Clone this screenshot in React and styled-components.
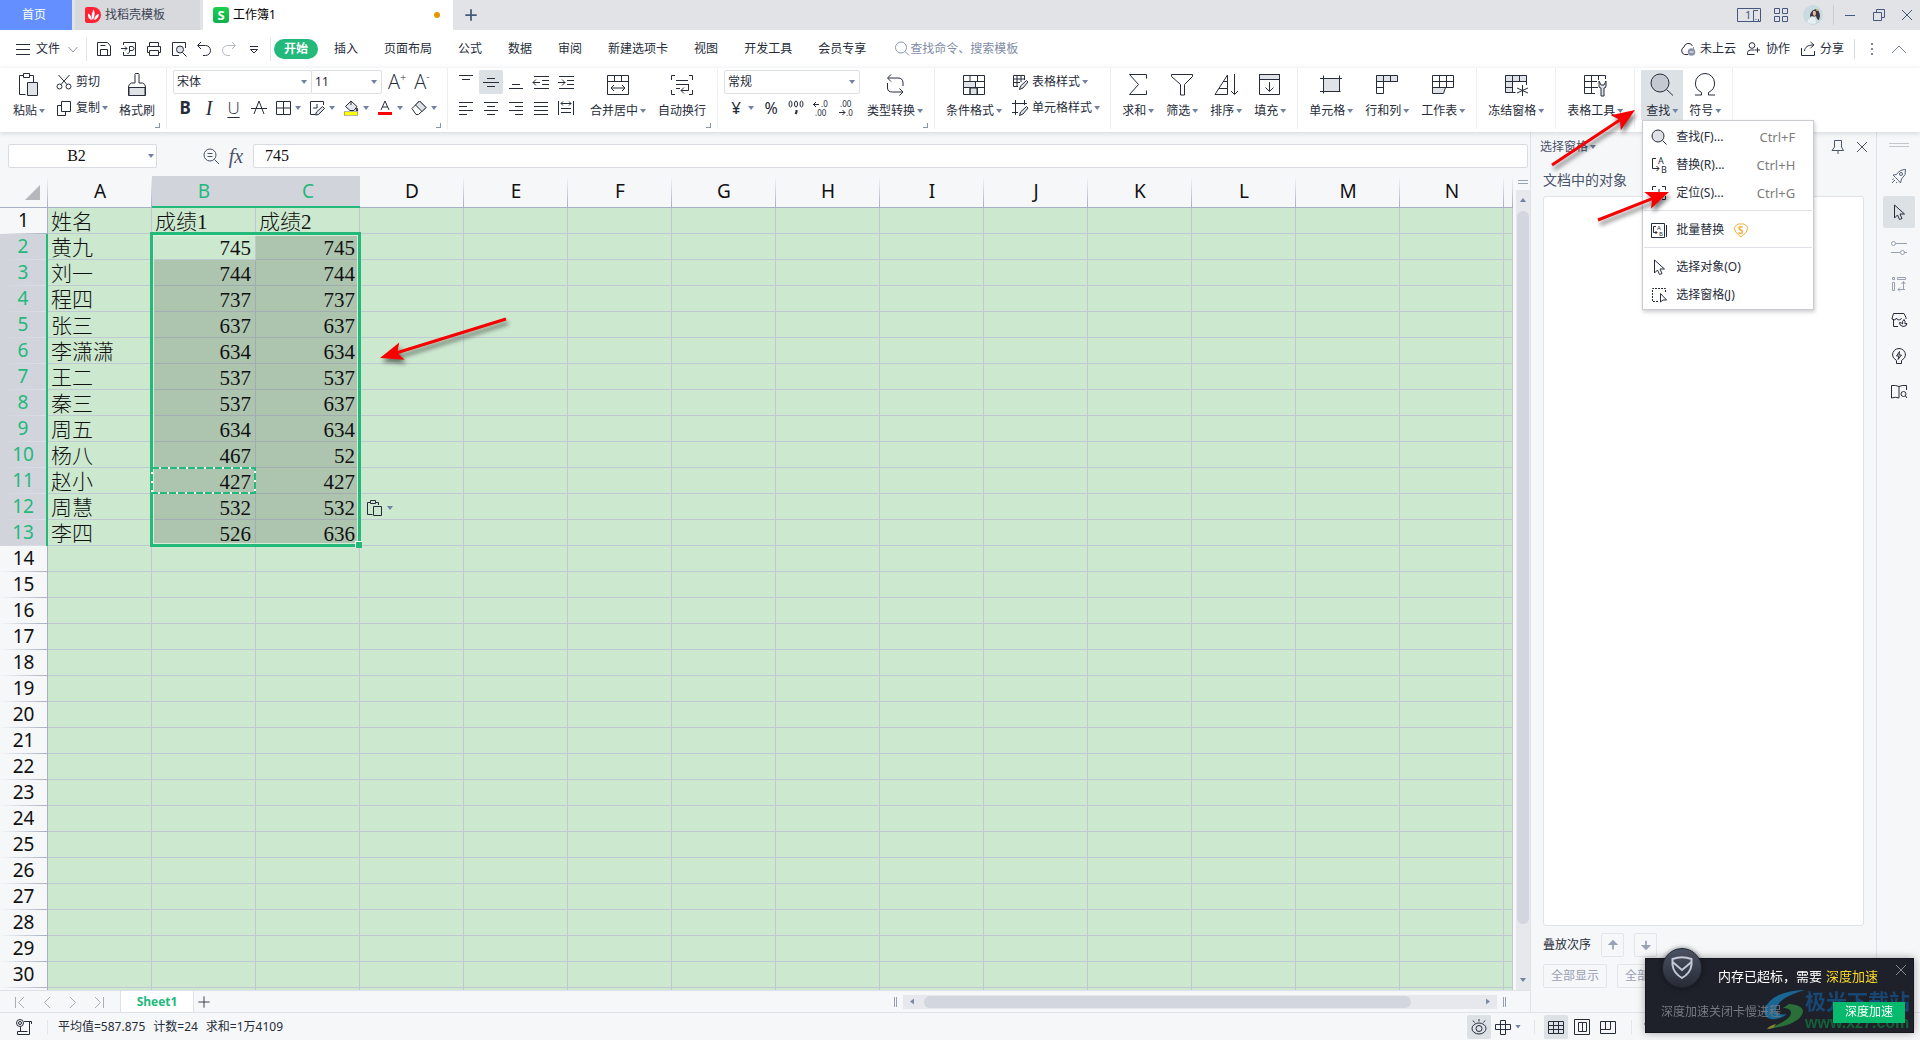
import React from "react"
import styled, { createGlobalStyle, css } from "styled-components"

const GlobalStyle = createGlobalStyle`
  * {
    box-sizing: border-box;
  }
  body {
    margin: 0;
    overflow: hidden;
    color: #262c3a;
    font: 12px/16px "Noto Sans", "Noto Sans CJK SC", sans-serif;
  }
  button, input, select, textarea {
    margin: 0;
    padding: 0;
    border: 0;
    background: none;
    color: inherit;
    font: inherit;
    outline: 0;
  }
  a {
    color: inherit;
    text-decoration: none;
  }
`

/* ---------- icons ---------- */

const Svg = styled.svg`
  display: block;
  flex: none;
  fill: none;
  stroke: currentColor;
  stroke-width: ${props => props.$weight || 1};
  overflow: visible;
  text {
    fill: currentColor;
    stroke: none;
    font-family: "Noto Sans", sans-serif;
  }
`

const shapes = {
  menu: <path d="M1 3.500h14M1 8.500h14M1 13.500h14" />,
  chevDown: <path d="M3.500 6l4.500 5 4.500-5" stroke="#8d93a0" />,
  chevUp: <path d="M1 12l7-7 7 7" />,
  save: <path d="M1.500 1.500v13h13V5l-3-3.500h-10zM4.500 14.500V8.500h7v6M4.500 4.500h5" />,
  pdf: (
    <path d="M2.500 4V1.500h12v13h-12V11M0 7.500h6M4 5.500l2 2-2 2M8.500 11V5.500h2.500a2 2 0 0 1 0 4H8.500M6.500 12.500c2 0 2-1.500 2-3" />
  ),
  print: <path d="M3.500 5.500v-4h9v4M3.500 11.500h-2v-6h13v6h-2M3.500 9.500h9v5h-9z" />,
  preview: (
    <>
      <path d="M14.500 7V1.500h-13v13H8" />
      <circle cx="9" cy="8.500" r="3.500" fill="#dfe2e8" />
      <path d="M11.500 11.500l4 4" />
    </>
  ),
  undo: <path d="M5 1L1.500 4.500 5 8M2 4.500h7.500a5 5 0 0 1 0 10H7" />,
  redo: <path d="M11 1l3.500 3.500L11 8M14 4.500H6.500a5 5 0 0 0 0 10H9" />,
  more: (
    <>
      <path d="M4 5.500h8" />
      <path d="M4.500 8.500h7l-3.500 3.500z" />
    </>
  ),
  search: (
    <>
      <circle cx="7" cy="6.500" r="5.500" />
      <path d="M11 10.500l4 4" />
    </>
  ),
  searchFill: (
    <>
      <circle cx="7" cy="7" r="6" fill="#dfe0e5" />
      <path d="M11.500 11.500l4 4" />
    </>
  ),
  cloud: (
    <>
      <path d="M8 13.500H4.500a4 4 0 0 1-.5-7.500 4.500 4.500 0 0 1 8.500-1M13.500 6.500v1" />
      <circle cx="11.500" cy="11" r="3.800" fill="#8b94a8" stroke="none" />
      <path d="M9.500 11h4" stroke="#fff" />
    </>
  ),
  person: (
    <>
      <circle cx="6" cy="4.500" r="2.800" />
      <path d="M8.500 13.500h-7v-2a3 3 0 0 1 3-2.500h4M11.500 6.500v5M9 9h5" />
    </>
  ),
  share: <path d="M1.500 7v7.500h13V10M4.500 10c.5-4 3-6 9-6M10.500 1l3.500 3-3.500 3" />,
  dots: <path d="M8 2v2M8 7v2M8 12v2" stroke="#7c8596" strokeWidth="2" />,
  plus: <path d="M8 1.500v13M1.500 8h13" />,
  close: <path d="M3 3l10 10M13 3L3 13" />,
  min: <path d="M3 8.500h10" />,
  restore: <path d="M2.500 5.500h8v8h-8zM5.500 5.500v-3h8v8h-3" />,
  apps: <path d="M1.500 1.500h5v5h-5zM9.500 1.500h5v5h-5zM1.500 9.500h5v5h-5zM9.500 9.500h5v5h-5z" />,
  paste: (
    <>
      <path d="M8.500 21.500h-6v-19h4M13 2.500h3.500V9M6.500.5h6v4h-6z" />
      <path d="M10.500 9.500h10v13h-10z" fill="#dfe2e6" />
    </>
  ),
  pasteSmall: (
    <>
      <path d="M6.500 14.500h-5v-12h3M9.500 2.500h3V5M4.500.5h5v3h-5z" />
      <path d="M7.500 6.500h8v9h-8z" />
    </>
  ),
  cut: (
    <>
      <circle cx="3.500" cy="12.500" r="2.500" />
      <circle cx="12.500" cy="12.500" r="2.500" />
      <path d="M2.500 1l8.500 9.500M13.500 1L5 10.500" />
    </>
  ),
  copy: <path d="M5.500 1.500h9v10h-9zM5.500 5.500h-4v10h8v-4" />,
  brush: (
    <>
      <path d="M10 10V2a1 1 0 0 1 1-1.500h2a1 1 0 0 1 1 1.500v8h3.500q3 1 3 4v8.500h-17V14q0-3 3-4z" />
      <path d="M4 14.500h16v8H4z" fill="#dfe2e6" />
    </>
  ),
  border: <path d="M1.500 1.500h14v13h-14zM8.500 1.500v13M1.500 8h14" />,
  drawBorder: (
    <>
      <path d="M6 14.500H1.500v-13h13V5M4 8h4M8 4v4" />
      <path d="M13.500 6.500l2 2-6 6-3 .5 1-3z" fill="#dfe2e6" />
    </>
  ),
  fill: (
    <>
      <path d="M8 1L2.500 6.500 7 10.500h4l3-4zM8 1v4M14 8q2 3 0 3t0-3" fill="#e5e7eb" />
      <path d="M1 13.500h14" stroke="#6b6f4a" strokeWidth="4" />
      <path d="M1.500 13.500h13" stroke="#ff0" strokeWidth="3" />
    </>
  ),
  fontColor: (
    <>
      <path d="M4 10L8 1l4 9M5.500 7h5" />
      <path d="M1 13.500h14" stroke="#f00" strokeWidth="3" />
    </>
  ),
  eraser: (
    <>
      <path d="M1 8.500L8.500 1l6.500 6.500-7.500 7H5z" />
      <path d="M4.500 5l6.500 6.500 4-4L8.500 1z" fill="#dfe2e6" />
    </>
  ),
  strike: <path d="M3 14L8 1l5 13M0 8.500h16" />,
  alignTop: <path d="M1 1.500h14M4 5.500h8" />,
  alignMid: <path d="M4 4.500h8M0 8.500h16M4 12.500h8" />,
  alignBot: <path d="M4 10.500h8M1 14.500h14" />,
  outdent: <path d="M1 2.500h15M9 6.500h7M9 10.500h7M1 14.500h15M0 8.500h7M3 5.500l-3 3 3 3" />,
  indent: <path d="M1 2.500h15M9 6.500h7M9 10.500h7M1 14.500h15M0 8.500h7M4 5.500l3 3-3 3" />,
  left: <path d="M1 2.500h14M1 6.500h8M1 10.500h14M1 14.500h8" />,
  center: <path d="M1 2.500h14M4 6.500h8M1 10.500h14M4 14.500h8" />,
  right: <path d="M1 2.500h14M7 6.500h8M1 10.500h14M7 14.500h8" />,
  justify: <path d="M1 2.500h14M1 6.500h14M1 10.500h14M1 14.500h14" />,
  spread: <path d="M.5 1v14M15.500 1v14M3 3.500h10M5 1.500l-2 2 2 2M11 1.500l2 2-2 2M3 8.500h10M3 12.500h10" />,
  merge: <path d="M1.500 2.500h21v19h-21zM1.500 8.500h21M8.500 2.500v6M15.500 2.500v6M5 15h14M8 12l-3 3 3 3M16 12l3 3-3 3" />,
  wrap: (
    <path d="M1.500 7V2.500H5M19 2.500h3.500V7M1.500 17v4.500H5M19 21.500h3.500V17M6 7.500h12M6 11.500h12M6 15.500h4M18.500 11v6.500H11M14 14.500l-3 3 3 3" />
  ),
  comma: (
    <>
      <ellipse cx="2.500" cy="4" rx="1.500" ry="3" />
      <ellipse cx="8" cy="4" rx="1.500" ry="3" />
      <ellipse cx="13.500" cy="4" rx="1.500" ry="3" />
      <path d="M8.500 10v2l-1 2" strokeWidth="2" />
    </>
  ),
  decLess: (
    <>
      <path d="M0 4.500h6M3 2L.500 4.500 3 7" />
      <text x="8" y="7" fontSize="8">.0</text>
      <text x="2" y="16" fontSize="8">.00</text>
    </>
  ),
  decMore: (
    <>
      <path d="M1 12.500h6M4.500 10L7 12.500 4.500 15" />
      <text x="2" y="7" fontSize="8">.00</text>
      <text x="8" y="16" fontSize="8">.0</text>
    </>
  ),
  convert: <path d="M8 1.500L4.500 5 8 8.500M5 5h10q5 0 5 5v3M4.500 10v5q0 4 5 4H20M16.500 15.500L20 19l-3.500 3.500" />,
  condFormat: (
    <>
      <path d="M1.500 2.500h21v19h-21z" />
      <path d="M1.500 8.500h12v6h-12zM8 15h7v6.500H8z" fill="#dfe2e6" />
      <path d="M1.500 8.500h21M1.500 14.500h21M8 2.500v6M15.500 2.500v6M13.500 8.500v6M8 14.500v7M15.500 14.500v7" />
    </>
  ),
  tableStyle: (
    <>
      <path d="M6 12.500H1.500v-11h11V6M1.500 5h11M1.500 8.500H8M5 1.500v11M9 1.500V8" />
      <path d="M14.500 6.500l1.500 1.500-5 6-3.500 1.500 1-3.500z" fill="#dfe2e6" />
    </>
  ),
  cellStyle: (
    <>
      <path d="M0 3.500h15M3.500 0v15M12.500 0v5M0 12.500h6" />
      <path d="M14.500 6.500l1.500 1.500-5 6-3.500 1.500 1-3.500z" fill="#dfe2e6" />
    </>
  ),
  sum: <path d="M20.500 5.500V1.500H3.500L12.500 11.500 3.500 21.500h17v-4" />,
  filter: <path d="M1.500 1.500h21v2l-8 8v10.500h-4V11.500l-9-8z" />,
  sort: <path d="M13.500 2v19.500H1zM9 8.500h4.500M5 15.500h8.500M20.500 1v20M17 18l3.500 3.500L24 18" />,
  fillDown: (
    <>
      <path d="M1.500 1.500h20v5h-20z" fill="#dfe2e6" />
      <path d="M1.500 1.500h20v20h-20zM11.500 9v9M7.500 14.500l4 4 4-4" />
    </>
  ),
  cell: (
    <>
      <path d="M4.500 5.500h16v13h-16z" fill="#dfe2e6" />
      <path d="M1 5.500h22M1 18.500h16M4.500 2.500v18M20.500 2.500v13M20 18.500h1.500" />
    </>
  ),
  rowCol: (
    <>
      <path d="M1.500 2.500h21v6h-21z" fill="#dfe2e6" />
      <path d="M8.500 2.500v18h-7v-18M15.500 2.500v6M1.500 8.500h21M1.500 14.500h7" />
    </>
  ),
  worksheet: (
    <>
      <path d="M1.500 14.500h13l-2 6h-11z" fill="#dfe2e6" />
      <path d="M1.500 2.500h21v12h-21zM1.500 8.500h21M8.500 2.500v12M15.500 2.500v12" />
    </>
  ),
  freeze: (
    <>
      <path d="M1.500 2.500h21v6h-14v11h-7z" fill="#dfe2e6" />
      <path d="M1.500 8.500h21V12M8.500 2.500v17h3M15.500 2.500v6M1.500 14.500h7M18.500 12v11M13 15l11 5M13 20l11-5" />
    </>
  ),
  tableTool: (
    <>
      <path d="M12 20.500H1.500v-18h21V6M1.500 8.500H14M1.500 14.500H15M8.500 2.500v18M15.500 2.500V7" />
      <path d="M16 8v5q0 2 2 2v8h3v-8q2 0 2-2V8l-2 4h-3z" fill="#dfe2e6" />
    </>
  ),
  find: (
    <>
      <circle cx="10" cy="10" r="9" fill="#c4c8d1" />
      <path d="M16.500 16.500l6.500 6" />
    </>
  ),
  omega: <path d="M2 22h6.500v-2.500Q2 16 2.500 10a9.500 9.500 0 0 1 19 0q.5 6-6 9.500V22H22" />,
  replace: (
    <>
      <path d="M5 1.500H1.500v10H8M5.500 9L8 11.500 5.500 14" />
      <text x="7" y="7" fontSize="9">A</text>
      <text x="10" y="16" fontSize="9">B</text>
    </>
  ),
  goto: <path d="M1.500 5V1.500H5M11 1.500h3.500V5M1.500 11v3.500H5M11 14.500h3.500V11M8 4v7M5 8l3 3 3-3" />,
  batch: (
    <>
      <path d="M.5 1.500h13v14H.500zM15.500 3v12M5 4.500H2.500v6H6M4.500 9L6 10.500 4.500 12" />
      <text x="6" y="8" fontSize="6">A</text>
      <text x="8" y="14" fontSize="6">B</text>
    </>
  ),
  pointer: <path d="M3.500 1v13l3-3 2 4.500 2.500-1-2-4.500h4.500z" />,
  pane: (
    <>
      <path d="M7 14.500H1.500v-13h13V6" strokeDasharray="2 1" />
      <path d="M9.500 6.500v8.500l2.500-2h3.500z" />
    </>
  ),
  coin: (
    <>
      <path d="M5 2h6l4 3.500-2 5L8 15l-5-4.500-2-5z" />
      <text x="5" y="12" fontSize="10" fontWeight="700">S</text>
    </>
  ),
  pin: <path d="M4.500 1.500h7v6.500l2 3.500H2l2.500-3.500zM8 11.500V15" />,
  rocket: (
    <>
      <path d="M14.500 1.500q-6 0-9 5L2 7l2.500 2.500 3 3L9.500 15l1-4q5-4 4-9.500zM1 15l3-3M1.500 12l1-1.500M5 15l1-1" />
      <circle cx="10" cy="6" r="1.500" />
    </>
  ),
  sliders: (
    <>
      <circle cx="2.500" cy="3.500" r="2" />
      <path d="M4.500 3.500H16M0 12.500h9M13 12.500h3" />
      <circle cx="11.500" cy="12.500" r="2" />
    </>
  ),
  layoutSwap: <path d="M1.500 1.500h2v2h-2zM6.500 1.500h8v2h-8zM1.500 6.500h2v8h-2zM12.500 13v-7M10.500 8l2-2.500 2 2.500M14 13.500H7M9 11.500l-2 2 2 2" />,
  store: (
    <>
      <path d="M2.500 7v7.500H7M1 6.500L2.500 1.500h10.500l2 4V7M1 6q0 2 2 2t2.500-2q.5 2 2.500 2t2.500-2" />
      <path d="M12 14.500q-4-1-3.500-4 2 0 3 1.500Q11 9 13 7.500q1.500 2 1 4.500 1-.5 2-.5 0 3-4 3z" />
    </>
  ),
  idea: <path d="M5.500 12.500Q1.500 10 1.500 7a6.500 6.500 0 0 1 13 0q0 3-4 5.500v3h-5zM8.500 3.500l-3 4.500h2.500l-1 3.500 3.500-4.500H8z" />,
  book: (
    <>
      <path d="M8 14Q5 12.500.5 14V1.500Q5 1 8 2.500q3-1.500 7.500-1V6M8 2.500V14" />
      <circle cx="12.500" cy="10" r="2.500" />
      <path d="M14.500 12l1.500 2" />
    </>
  ),
  zoomCell: (
    <>
      <circle cx="7" cy="7" r="6" />
      <path d="M4.500 5.500h5M4.500 8.500h5M11.500 11.500l4.500 4.500" />
    </>
  ),
  first: <path d="M2.500 3v11M11 3L5.500 8.500 11 14" />,
  prev: <path d="M11 3L5.500 8.500 11 14" />,
  next: <path d="M5 3l5.500 5.500L5 14" />,
  last: <path d="M12.500 3v11M4 3l5.500 5.500L4 14" />,
  macro: (
    <>
      <circle cx="4" cy="4" r="3.500" />
      <circle cx="4" cy="4" r="1.500" />
      <path d="M8 2.500h7.500V5M13.500 3v12.500h-12v-3h10M4.500 8v4" />
    </>
  ),
  eye: (
    <>
      <ellipse cx="8" cy="9.500" rx="7" ry="5.500" />
      <circle cx="8" cy="9.500" r="3" />
      <path d="M8 0v2.500M2 1.500l1.500 2M14 1.500l-1.500 2" />
    </>
  ),
  cross: <path d="M5.500 1.500h5v14h-5zM.5 5.500h15v5H.500z" />,
  gridView: <path d="M.5 2.500h15v12H.500zM.5 6.500h15M.5 10.500h15M5.500 2.500v12M10.500 2.500v12" />,
  pageView: <path d="M.5.5h15v15H.500zM4.500 3.500h8v9h-8zM8.500 3.500v9" />,
  splitView: <path d="M.5 2.500h15v12H.500zM5.500 2.500v8M10.500 2.500v8M.5 10.500h10" />,
  up: <path d="M8 3v10M4.500 7L8 3.500 11.500 7z" fill="currentColor" strokeWidth="2" />,
  down: <path d="M8 3v10M4.500 9L8 12.500 11.500 9z" fill="currentColor" strokeWidth="2" />,
}

const Icon = ({ name, size = 16, weight }) => {
  const box = size > 16 ? 24 : 16
  return (
    <Svg width={size} height={size} viewBox={`0 0 ${box} ${box}`} $weight={weight} aria-hidden="true">
      {shapes[name]}
    </Svg>
  )
}

const Caret = styled.i`
  flex: none;
  width: 6px;
  height: 4px;
  background: ${props => props.$color || "#7382a0"};
  clip-path: ${props =>
    props.$up ? "polygon(0 100%, 100% 100%, 50% 0)" : "polygon(0 0, 100% 0, 50% 100%)"};
`

/* ---------- title bar ---------- */

const Page = styled.div`
  display: flex;
  flex-direction: column;
  height: 100vh;
  background: #f6f7f9;
`
const TitleBar = styled.header`
  display: flex;
  align-items: center;
  flex: none;
  height: 30px;
  background: #e1e3e7;
  color: #44587c;
`
const HomeTab = styled.button`
  width: 72px;
  height: 30px;
  margin-right: 3px;
  padding-right: 4px;
  background: #638fff;
  color: #fff;
`
const DocTab = styled.button`
  display: flex;
  align-items: center;
  gap: 4px;
  width: ${props => (props.$active ? 250 : 125)}px;
  height: 30px;
  margin-right: 3px;
  padding: 0 10px;
  background: ${props => (props.$active ? "#fff" : "#d8d9dd")};
  color: ${props => (props.$active ? "#000" : "#3c4354")};
`
const SheetLogo = styled.span`
  width: 16px;
  height: 16px;
  border-radius: 3px;
  background: linear-gradient(#1ad04d, #11b04c);
  color: #fff;
  font-size: 13px;
  font-weight: 700;
  text-align: center;
`
const Unsaved = styled.i`
  width: 6px;
  height: 6px;
  margin-left: auto;
  margin-right: 3px;
  border-radius: 50%;
  background: #e59700;
`
const IconButton = styled.button`
  display: flex;
  align-items: center;
  justify-content: center;
  flex: none;
  width: ${props => props.$w || 24}px;
  height: ${props => props.$h || 24}px;
  border-radius: 2px;
  background: ${props => (props.$on ? "#dce1e6" : "none")};
  color: ${props => props.$color || "inherit"};
`
const Push = styled.div`
  flex: 1;
`
const Rule = styled.i`
  flex: none;
  width: 1px;
  height: ${props => props.$h || 20}px;
  margin: 0 ${props => props.$gap || 0}px;
  background: ${props => props.$color || "#e3e5e9"};
`

const DocerLogo = () => (
  <svg width="16" height="16" viewBox="0 0 16 16" aria-hidden="true">
    <path d="M2 0h6a8 8 0 0 1 0 16H2a2 2 0 0 1-2-2V2a2 2 0 0 1 2-2z" fill="#ff2335" />
    <path d="M8 13Q5 10 8.500 2.500 11 7 8 13zM7 13Q2.500 12 3 6.500q3 1 4 6.500zM9 13q1-5.500 5-6-.500 5-5 6z" fill="#fff" />
  </svg>
)

const Avatar = () => (
  <svg width="20" height="20" viewBox="0 0 20 20" aria-hidden="true">
    <circle cx="10" cy="10" r="10" fill="#c8dbe0" />
    <path d="M9 6q3-3 6-1 2 3 2 6l-1 4q-2 0-3-4-2 1-4 0l-2 1q0-4 2-6z" fill="#3a343c" />
    <path d="M10 6q3-1 3 2t-2 3q-2-2-1-5z" fill="#dfb9aa" />
    <path d="M4 17q2-5 8-5l1 6q-5 2-9-1z" fill="#e8eff1" />
    <circle cx="14" cy="5" r="1" fill="#e0b94e" />
  </svg>
)

const WindowCount = () => (
  <Svg width="24" height="14" viewBox="0 0 24 14" aria-hidden="true">
    <path d="M.5.5h23v13H.500zM16.500 13V2.500H21M21.500 13V11M18.500 11.500h1" />
    <text x="8" y="11" fontSize="11">1</text>
  </Svg>
)

const Title = () => (
  <TitleBar>
    <HomeTab>首页</HomeTab>
    <DocTab>
      <DocerLogo />
      找稻壳模板
    </DocTab>
    <DocTab $active>
      <SheetLogo>S</SheetLogo>
      工作簿1
      <Unsaved />
    </DocTab>
    <IconButton $w={30} aria-label="新建">
      <Icon name="plus" size={14} weight={2} />
    </IconButton>
    <Push />
    <IconButton $w={36} aria-label="窗口"><WindowCount /></IconButton>
    <IconButton $w={28} aria-label="应用"><Icon name="apps" /></IconButton>
    <IconButton $w={36} aria-label="账户"><Avatar /></IconButton>
    <Rule $color="#c9ccd4" $gap={2} />
    <IconButton $w={28} aria-label="最小化"><Icon name="min" /></IconButton>
    <IconButton $w={30} aria-label="还原"><Icon name="restore" /></IconButton>
    <IconButton $w={26} aria-label="关闭"><Icon name="close" /></IconButton>
  </TitleBar>
)

/* ---------- menu row ---------- */

const MenuBar = styled.nav`
  display: flex;
  align-items: center;
  flex: none;
  height: 38px;
  padding-left: 15px;
  background: #fff;
`
const FileButton = styled.button`
  display: flex;
  align-items: center;
  gap: 5px;
  width: 71px;
`
const QuickBar = styled.div`
  display: flex;
  gap: 1px;
  padding: 0 4px 0 5px;
`
const Tabs = styled.div`
  display: flex;
  gap: 6px;
  margin-left: 3px;
`
const MenuTab = styled.button`
  height: 20px;
  padding: 0 10px;
  border-radius: 10px;
  ${props =>
    props.$active &&
    css`
      background: #22b97b;
      color: #fff;
      font-weight: 700;
    `}
`
const CommandSearch = styled.label`
  display: flex;
  align-items: center;
  margin-left: 18px;
  color: #8b97ad;
  input {
    width: 120px;
  }
  input::placeholder {
    color: #7f8ca5;
    opacity: 1;
  }
`
const AccountLink = styled.a`
  display: flex;
  align-items: center;
  gap: 4px;
  margin-right: 10px;
`

const menuTabs = ["开始", "插入", "页面布局", "公式", "数据", "审阅", "新建选项卡", "视图", "开发工具", "会员专享"]
const quick = [
  ["save", "保存"],
  ["pdf", "输出PDF"],
  ["print", "打印"],
  ["preview", "打印预览"],
  ["undo", "撤销"],
  ["redo", "恢复"],
  ["more", "更多"],
]

const Menu = () => (
  <MenuBar>
    <FileButton>
      <Icon name="menu" />
      文件
      <Icon name="chevDown" />
    </FileButton>
    <Rule $h={24} />
    <QuickBar>
      {quick.map(([icon, label]) => (
        <IconButton key={icon} aria-label={label} $color={icon === "redo" ? "#b4b8c0" : undefined}>
          <Icon name={icon} />
        </IconButton>
      ))}
    </QuickBar>
    <Rule $h={24} />
    <Tabs>
      {menuTabs.map((tab, i) => (
        <MenuTab key={tab} $active={i === 0}>{tab}</MenuTab>
      ))}
    </Tabs>
    <CommandSearch>
      <Icon name="search" />
      <input placeholder="查找命令、搜索模板" aria-label="查找命令" />
    </CommandSearch>
    <Push />
    <AccountLink href="#cloud"><Icon name="cloud" />未上云</AccountLink>
    <AccountLink href="#team"><Icon name="person" />协作</AccountLink>
    <AccountLink href="#share"><Icon name="share" />分享</AccountLink>
    <Rule $color="#d5d8de" />
    <IconButton $w={34} aria-label="更多"><Icon name="dots" /></IconButton>
    <IconButton $w={20} $color="#7c8596" aria-label="收起"><Icon name="chevUp" /></IconButton>
    <Rule $gap={5} $color="transparent" />
  </MenuBar>
)

/* ---------- ribbon ---------- */

const Ribbon = styled.div`
  position: relative;
  z-index: 2;
  display: flex;
  flex: none;
  height: 64px;
  padding-left: 2px;
  background: #fff;
  box-shadow: 0 1px 5px rgba(60, 70, 90, 0.2);
`
const Group = styled.section`
  position: relative;
  display: flex;
  gap: ${props => props.$gap || 2}px;
  height: 61px;
  padding: 2px 6px 0;
  border-right: 1px solid #eceef1;
`
const BigButton = styled.button`
  display: flex;
  flex-direction: column;
  align-items: center;
  gap: 6px;
  height: 50px;
  padding: 3px 5px 0;
  background: ${props => (props.$on ? "#dce1e6" : "none")};
  white-space: nowrap;
`
const Label = styled.span`
  display: flex;
  align-items: center;
  gap: 2px;
`
const Stack = styled.div`
  display: flex;
  flex-direction: column;
  gap: 2px;
  padding-right: ${props => props.$after || 0}px;
`
const SmallButton = styled.button`
  display: flex;
  align-items: center;
  gap: 4px;
  height: 24px;
  padding: 0 4px;
`
const Row = styled.div`
  display: flex;
  align-items: center;
  gap: ${props => props.$gap || 0}px;
  height: 24px;
`
const SelectBox = styled.label`
  display: flex;
  align-items: center;
  width: ${props => props.$w}px;
  height: 24px;
  margin-left: ${props => (props.$joined ? -1 : 0)}px;
  padding: 0 4px 0 3px;
  border: 1px solid #dcdfe4;
  border-radius: 2px;
  background: #fff;
  select {
    flex: 1;
    min-width: 0;
    appearance: none;
  }
`
const Split = styled.button`
  display: flex;
  align-items: center;
  gap: 4px;
  width: 34px;
  height: 24px;
  padding-left: 4px;
`
const Glyph = styled.span`
  width: 16px;
  font-size: ${props => props.$size || 17}px;
  font-weight: ${props => (props.$bold ? 700 : 400)};
  font-style: ${props => (props.$italic ? "italic" : "normal")};
  font-family: ${props => (props.$italic ? '"Liberation Serif", serif' : "inherit")};
  text-decoration: ${props => (props.$under ? "underline" : "none")};
  text-underline-offset: 3px;
  text-align: center;
  white-space: nowrap;
  sup {
    font-size: 11px;
    line-height: 0;
  }
`
const ThinGlyph = styled(Glyph)`
  font-family: "Open Sans", sans-serif;
  font-weight: 300;
`
const Launcher = styled.i`
  position: absolute;
  right: 6px;
  bottom: 1px;
  width: 5px;
  height: 5px;
  border: solid #8b95a8;
  border-width: 0 1px 1px 0;
`
const Anchor = styled.div`
  position: relative;
`

const Big = ({ icon, children, caret = true, on }) => (
  <BigButton $on={on}>
    <Icon name={icon} size={24} />
    <Label>
      {children}
      {caret && <Caret />}
    </Label>
  </BigButton>
)

const Small = ({ icon, children, caret }) => (
  <SmallButton>
    <Icon name={icon} />
    <Label>
      {children}
      {caret && <Caret />}
    </Label>
  </SmallButton>
)

const SplitIcon = ({ name, label }) => (
  <Split aria-label={label}>
    <Icon name={name} />
    <Caret />
  </Split>
)

const alignRows = [
  ["alignTop", "alignMid", "alignBot", "outdent", "indent"],
  ["left", "center", "right", "justify", "spread"],
]

/* ---------- find menu ---------- */

const FindMenu = styled.div`
  position: absolute;
  top: 50px;
  left: 1px;
  width: 172px;
  padding: 2px 0 0;
  border: 1px solid #c9ccd2;
  background: #fff;
  box-shadow: 1px 2px 4px rgba(0, 0, 0, 0.2);
`
const FindItem = styled.button`
  display: flex;
  align-items: center;
  gap: 9px;
  width: 100%;
  height: 28px;
  padding: 0 18px 0 8px;
  kbd {
    margin-left: auto;
    color: #7d7d7d;
    font-family: inherit;
    font-size: 13px;
  }
`
const FindRule = styled.hr`
  height: 1px;
  margin: 3px 1px 5px;
  border: 0;
  background: #e0e1e8;
`
const Gold = styled.span`
  color: #f2ae3c;
`

const ArrowSvg = styled.svg`
  position: absolute;
  left: ${props => props.$x}px;
  top: ${props => props.$y}px;
  z-index: 5;
  overflow: visible;
  pointer-events: none;
  filter: drop-shadow(2px 4px 2px rgba(0, 0, 0, 0.5));
`

// Straight pointer from (0, 0) to (dx, dy), head included
const Arrow = ({ x, y, dx, dy }) => {
  const length = Math.hypot(dx, dy)
  const angle = (Math.atan2(dy, dx) * 180) / Math.PI
  return (
    <ArrowSvg $x={x} $y={y} width="1" height="1" aria-hidden="true">
      <g transform={`rotate(${angle})`} fill="#f80000">
        <path d={`M0 -1.5H${length - 16}V1.5H0z`} />
        <path d={`M${length} 0L${length - 23} -9 ${length - 18} 0 ${length - 23} 9z`} />
      </g>
    </ArrowSvg>
  )
}

const FindPopup = () => (
  <FindMenu>
    <FindItem><Icon name="searchFill" />查找(F)...<kbd>Ctrl+F</kbd></FindItem>
    <FindItem><Icon name="replace" />替换(R)...<kbd>Ctrl+H</kbd></FindItem>
    <FindItem><Icon name="goto" />定位(S)...<kbd>Ctrl+G</kbd></FindItem>
    <FindRule />
    <FindItem>
      <Icon name="batch" />
      批量替换
      <Gold><Icon name="coin" /></Gold>
    </FindItem>
    <FindRule />
    <FindItem><Icon name="pointer" />选择对象(O)</FindItem>
    <FindItem><Icon name="pane" />选择窗格(J)</FindItem>
  </FindMenu>
)

const Tools = () => (
  <Ribbon>
    <Group>
      <Big icon="paste">粘贴</Big>
      <Stack>
        <Small icon="cut">剪切</Small>
        <Small icon="copy" caret>复制</Small>
      </Stack>
      <Big icon="brush" caret={false}>格式刷</Big>
      <Launcher />
    </Group>
    <Group>
      <Stack>
        <Row>
          <SelectBox $w={139}>
            <select aria-label="字体"><option>宋体</option></select>
            <Caret />
          </SelectBox>
          <SelectBox $w={71} $joined>
            <select aria-label="字号"><option>11</option></select>
            <Caret />
          </SelectBox>
          <IconButton $w={28} aria-label="增大字号"><ThinGlyph $size={20}>A<sup>+</sup></ThinGlyph></IconButton>
          <IconButton aria-label="减小字号"><ThinGlyph $size={20}>A<sup>-</sup></ThinGlyph></IconButton>
        </Row>
        <Row>
          <IconButton aria-label="加粗"><Glyph $bold>B</Glyph></IconButton>
          <IconButton aria-label="倾斜"><Glyph $italic $size={20}>I</Glyph></IconButton>
          <IconButton $w={25} aria-label="下划线"><ThinGlyph $under>U</ThinGlyph></IconButton>
          <IconButton $w={25} aria-label="删除线"><Icon name="strike" /></IconButton>
          <SplitIcon name="border" label="边框" />
          <SplitIcon name="drawBorder" label="绘制边框" />
          <SplitIcon name="fill" label="填充颜色" />
          <SplitIcon name="fontColor" label="字体颜色" />
          <SplitIcon name="eraser" label="清除" />
        </Row>
      </Stack>
      <Launcher />
    </Group>
    <Group>
      <Stack $after={5}>
        {alignRows.map((row, i) => (
          <Row key={i} $gap={1}>
            {row.map(icon => (
              <IconButton key={icon} aria-label={icon} $on={icon === "alignMid"}>
                <Icon name={icon} />
              </IconButton>
            ))}
          </Row>
        ))}
      </Stack>
      <Big icon="merge">合并居中</Big>
      <Big icon="wrap" caret={false}>自动换行</Big>
      <Launcher />
    </Group>
    <Group>
      <Stack>
        <Row>
          <SelectBox $w={136}>
            <select aria-label="数字格式"><option>常规</option></select>
            <Caret />
          </SelectBox>
        </Row>
        <Row $gap={1}>
          <Split aria-label="货币"><Glyph>¥</Glyph><Caret /></Split>
          <IconButton aria-label="百分比"><Glyph $size={16}>%</Glyph></IconButton>
          <IconButton aria-label="千位分隔"><Icon name="comma" /></IconButton>
          <IconButton aria-label="增加小数位"><Icon name="decLess" /></IconButton>
          <IconButton aria-label="减少小数位"><Icon name="decMore" /></IconButton>
        </Row>
      </Stack>
      <Big icon="convert">类型转换</Big>
      <Launcher />
    </Group>
    <Group $gap={1}>
      <Big icon="condFormat">条件格式</Big>
      <Stack>
        <Small icon="tableStyle" caret>表格样式</Small>
        <Small icon="cellStyle" caret>单元格样式</Small>
      </Stack>
    </Group>
    <Group>
      <Big icon="sum">求和</Big>
      <Big icon="filter">筛选</Big>
      <Big icon="sort">排序</Big>
      <Big icon="fillDown">填充</Big>
    </Group>
    <Group>
      <Big icon="cell">单元格</Big>
      <Big icon="rowCol">行和列</Big>
      <Big icon="worksheet">工作表</Big>
    </Group>
    <Group>
      <Big icon="freeze">冻结窗格</Big>
    </Group>
    <Group>
      <Big icon="tableTool">表格工具</Big>
    </Group>
    <Group $gap={1}>
      <Anchor>
        <Big icon="find" on>查找</Big>
        <FindPopup />
        <Arrow x={-89} y={95} dx={83} dy={-55} />
        <Arrow x={-43} y={150} dx={71} dy={-28} />
      </Anchor>
      <Big icon="omega">符号</Big>
    </Group>
  </Ribbon>
)

/* ---------- sheet ---------- */

const Work = styled.main`
  display: flex;
  flex: 1;
  min-height: 0;
`
const SheetArea = styled.div`
  display: flex;
  flex-direction: column;
  flex: 1;
  min-width: 0;
`
const FormulaBar = styled.div`
  display: flex;
  align-items: center;
  flex: none;
  height: 44px;
  padding: 4px 2px 0 8px;
  input {
    min-width: 0;
    font-family: "Liberation Serif", serif;
    font-size: 16px;
    color: #111;
  }
`
const NameBox = styled.label`
  display: flex;
  align-items: center;
  width: 149px;
  height: 24px;
  margin-right: 40px;
  padding: 0 2px;
  border: 1px solid #d8dbe1;
  border-radius: 2px;
  background: #fff;
  input {
    flex: 1;
    padding-right: 6px;
    text-align: center;
  }
`
const Fx = styled.span`
  margin-right: 6px;
  color: #4a5266;
  font: italic 20px/24px "Liberation Serif", serif;
`
const FormulaInput = styled.input`
  flex: 1;
  height: 24px;
  padding: 0 11px;
  border: 1px solid #d8dbe1;
  border-radius: 2px;
  background: #fff;
`
const GridRow = styled.div`
  display: flex;
  flex: 1;
  min-height: 0;
`
const GridView = styled.div`
  position: relative;
  flex: 1;
  min-width: 0;
  overflow: hidden;
`
const Grid = styled.table`
  width: 100%;
  table-layout: fixed;
  border-collapse: separate;
  border-spacing: 0;
`
const ColHead = styled.th`
  height: 32px;
  padding: 0 0 1px;
  border-bottom: ${props => (props.$on ? "2px solid #22b97b" : "1px solid #a9b0c3")};
  background: ${props =>
    props.$on
      ? "#d2d4dc"
      : "linear-gradient(#f6f7f9, #a9b0c3) right / 1px 100% no-repeat #f6f7f9"};
  color: ${props => (props.$on ? "#22b97b" : "#111")};
  font-size: 19px;
  font-weight: 400;
`
const Corner = styled(ColHead)`
  vertical-align: bottom;
  i {
    display: block;
    width: 15px;
    height: 15px;
    margin: 0 0 6px 25px;
    background: #b5b7bb;
    clip-path: polygon(100% 0, 100% 100%, 0 100%);
  }
`
const RowHead = styled.th`
  height: 26px;
  padding: 0 0 2px;
  border-right: ${props => (props.$on ? "2px solid #22b97b" : "1px solid #a9b0c3")};
  background: ${props =>
    props.$on
      ? "linear-gradient(90deg, #d2d4dc, #dcdfe9) bottom / 100% 1px no-repeat #d2d4dc"
      : "linear-gradient(90deg, #f6f7f9, #a9b0c3) bottom / 100% 1px no-repeat #f6f7f9"};
  color: ${props => (props.$on ? "#22b97b" : "#111")};
  font-size: 19px;
  font-weight: 400;
  line-height: 24px;
`
const Cell = styled.td`
  height: 26px;
  padding: 4px 4px 0 3px;
  border: solid ${props => (props.$picked ? "#a2adb2" : "#c0c9d2")};
  border-width: 0 1px 1px 0;
  background: ${props => (props.$picked ? "#adc5af" : "#cce8cf")};
  color: #111;
  font: 300 21px/21px "Liberation Serif", "Noto Sans CJK SC", serif;
  text-align: ${props => (props.$number ? "right" : "left")};
  white-space: nowrap;
`
const Selection = styled.div`
  position: absolute;
  left: 150px;
  top: 56px;
  width: 211px;
  height: 315px;
  border: 3px solid #22b97b;
  box-shadow: inset 0 0 0 1px rgba(225, 245, 228, 0.8);
  pointer-events: none;
  &::after {
    content: "";
    position: absolute;
    right: -4px;
    bottom: -4px;
    width: 6px;
    height: 6px;
    border: solid #fff;
    border-width: 1px 0 0 1px;
    background: #22b97b;
  }
`
const CopyFrame = styled.svg`
  position: absolute;
  left: 151px;
  top: 291px;
  width: 105px;
  height: 27px;
  fill: none;
  stroke-width: 2;
`
const PasteTag = styled.button`
  position: absolute;
  left: 366px;
  top: 324px;
  display: flex;
  align-items: center;
  gap: 5px;
`

const columns = "ABCDEFGHIJKLMN".split("")
const rows = [
  ["姓名", "成绩1", "成绩2"],
  ["黄九", 745, 745],
  ["刘一", 744, 744],
  ["程四", 737, 737],
  ["张三", 637, 637],
  ["李潇潇", 634, 634],
  ["王二", 537, 537],
  ["秦三", 537, 637],
  ["周五", 634, 634],
  ["杨八", 467, 52],
  ["赵小", 427, 427],
  ["周慧", 532, 532],
  ["李四", 526, 636],
]

// The last row only peeks out above the sheet tabs, so it carries no number
const rowNumbers = [...Array.from({ length: 30 }, (_, r) => r + 1), ""]

const Sheet = () => (
  <GridView>
    <Grid>
      <colgroup>
        <col width="48" />
        {columns.map(c => <col key={c} width="104" />)}
        <col />
      </colgroup>
      <thead>
        <tr>
          <Corner><i /></Corner>
          {columns.map(c => (
            <ColHead key={c} $on={c === "B" || c === "C"}>{c}</ColHead>
          ))}
          <ColHead />
        </tr>
      </thead>
      <tbody>
        {rowNumbers.map((number, r) => (
          <tr key={r}>
            <RowHead $on={r > 0 && r < 13}>{number}</RowHead>
            {columns.map((c, i) => {
              const value = rows[r] && rows[r][i]
              const inside = r > 0 && r < 13 && (i === 1 || i === 2)
              return (
                <Cell key={c} $number={typeof value === "number"} $picked={inside && !(r === 1 && i === 1)}>
                  {value}
                </Cell>
              )
            })}
            <Cell />
          </tr>
        ))}
      </tbody>
    </Grid>
    <Selection />
    <CopyFrame viewBox="0 0 105 27" aria-hidden="true">
      <rect x="1" y="1" width="103" height="25" stroke="#fff" />
      <rect x="1" y="1" width="103" height="25" stroke="#22b97b" strokeDasharray="7 2" />
    </CopyFrame>
    <PasteTag aria-label="粘贴选项">
      <Icon name="pasteSmall" />
      <Caret />
    </PasteTag>
    <Arrow x={506} y={143} dx={-126} dy={39} />
  </GridView>
)

const VScroll = styled.div`
  display: flex;
  flex-direction: column;
  align-items: center;
  flex: none;
  width: 17px;
  padding-left: 3px;
`
const SplitGrip = styled.i`
  flex: none;
  width: 10px;
  height: 4px;
  margin: 4px 0 6px;
  border: solid #98a1b3;
  border-width: 1px 0;
`
const VTrack = styled.div`
  display: flex;
  flex-direction: column;
  align-items: center;
  flex: 1;
  width: 14px;
  padding: 8px 0;
  background: #e7e8ee;
`
const VThumb = styled.div`
  flex: 1;
  width: 12px;
  margin: 9px 0 54px;
  border-radius: 6px;
  background: #d3d6de;
`
const SheetBar = styled.div`
  display: flex;
  align-items: center;
  flex: none;
  height: 23px;
  padding: 0 24px 0 8px;
  border: solid #dfe1e9;
  border-width: 1px 0;
`
const SheetTab = styled.button`
  width: 74px;
  height: 21px;
  margin: 0 2px 0 8px;
  border: solid #dfe1e9;
  border-width: 0 1px;
  background: #fff;
  color: #22b97b;
  font-family: "Open Sans", sans-serif;
  font-weight: 700;
`
const HScroll = styled.div`
  display: flex;
  align-items: center;
  width: 40%;
  max-width: 594px;
  height: 14px;
  margin: 0 6px;
  padding: 0 7px;
  background: #e7e8ee;
`
const HThumb = styled.div`
  flex: 1;
  height: 12px;
  margin: 0 75px 0 10px;
  border-radius: 6px;
  background: #d3d6de;
`
const HCaret = styled.i`
  width: 4px;
  height: 6px;
  background: #7f8ba5;
  clip-path: ${props =>
    props.$left ? "polygon(100% 0, 100% 100%, 0 50%)" : "polygon(0 0, 100% 50%, 0 100%)"};
`
const BarGrip = styled.i`
  width: 3px;
  height: 10px;
  border: solid #98a1b3;
  border-width: 0 1px;
`

/* ---------- selection pane ---------- */

const Pane = styled.aside`
  display: flex;
  flex-direction: column;
  flex: none;
  width: 347px;
  padding: 3px 12px 24px;
  border: solid #e0e2ea;
  border-width: 0 1px 1px;
  color: #49536a;
`
const PaneHead = styled.div`
  display: flex;
  align-items: center;
  height: 24px;
  margin: 0 -10px 0 -3px;
`
const PaneTitle = styled.h2`
  margin: 9px 0 5px;
  font-size: 14px;
  font-weight: 400;
  line-height: 23px;
`
const ObjectList = styled.div`
  flex: 1;
  border: 1px solid #dfe2e7;
  border-radius: 3px;
  background: #fff;
`
const Actions = styled.div`
  display: flex;
  align-items: center;
  gap: 10px;
  margin-top: 7px;
  color: #262c3a;
`
const FlatButton = styled.button`
  display: flex;
  align-items: center;
  justify-content: center;
  width: ${props => props.$w}px;
  height: 24px;
  border: 1px solid #e3e5ea;
  border-radius: 2px;
  color: #99a2b5;
`
const SideBar = styled.aside`
  display: flex;
  flex-direction: column;
  align-items: center;
  gap: 4px;
  flex: none;
  width: 43px;
  padding-top: 11px;
  border-bottom: 1px solid #dfe1e9;
`
const DragGrip = styled.i`
  width: 20px;
  height: 4px;
  margin-bottom: 9px;
  border: solid #c4c6cb;
  border-width: 1px 0;
`

const sideTools = [
  ["rocket", "#56617a"],
  ["pointer", "#262c3a"],
  ["sliders", "#99a0b0"],
  ["layoutSwap", "#99a0b0"],
  ["store", "#262c3a"],
  ["idea", "#262c3a"],
  ["book", "#262c3a"],
]

/* ---------- status bar ---------- */

const StatusBar = styled.footer`
  display: flex;
  align-items: center;
  flex: none;
  height: 27px;
`
const Stats = styled.div`
  display: flex;
  gap: 8px;
  padding-left: 10px;
`
const ViewTools = styled.div`
  display: flex;
  align-items: center;
  width: 453px;
`

/* ---------- memory notice ---------- */

const Notice = styled.div`
  position: fixed;
  right: 6px;
  bottom: 7px;
  z-index: 10;
  width: 269px;
  height: 75px;
  border: 1px solid #14171d;
  background: #1e212a;
  color: #fff;
  box-shadow: 0 0 8px rgba(0, 0, 0, 0.35);
`
const Shield = styled.div`
  position: absolute;
  left: 16px;
  top: -11px;
  display: flex;
  align-items: center;
  justify-content: center;
  width: 40px;
  height: 40px;
  border: 1px solid #20242d;
  border-radius: 50%;
  background: linear-gradient(#4a5262, #262b36);
  box-shadow: 0 0 5px rgba(0, 0, 0, 0.5);
  color: #c4c9d6;
`
const NoticeTitle = styled.p`
  display: flex;
  gap: 4px;
  margin: 0;
  padding: 7px 0 0 72px;
  font-size: 13px;
  line-height: 20px;
  span {
    color: #f8d62b;
  }
`
const NoticeRow = styled.div`
  position: relative;
  display: flex;
  align-items: center;
  justify-content: space-between;
  height: 22px;
  margin-top: 15px;
  padding: 0 8px 0 15px;
  color: #777a82;
`
const Boost = styled.button`
  width: 72px;
  height: 21px;
  background: #06b96d;
  color: #fff;
`
const NoticeClose = styled.button`
  position: absolute;
  right: 4px;
  top: 3px;
  color: #858993;
`
const Watermark = styled.div`
  position: absolute;
  left: 115px;
  top: 30px;
  display: flex;
  opacity: 0.75;
`
const MarkText = styled.div`
  color: #16548c;
  font-size: 21px;
  font-weight: 700;
  line-height: 24px;
  white-space: nowrap;
  small {
    display: block;
    color: #13743f;
    font: 700 16px/20px "Liberation Sans", sans-serif;
  }
`

const MemoryNotice = () => (
  <Notice role="status">
    <Shield>
      <Svg width="22" height="22" viewBox="0 0 22 22" $weight={2} aria-hidden="true">
        <path d="M1.500 2Q11-1.500 20.500 2v6q-1 8-9.500 13Q2.500 16 1.500 8zM1.500 5l9.500 8 9.500-8" />
      </Svg>
    </Shield>
    <NoticeTitle>
      内存已超标，需要 <span>深度加速</span>
    </NoticeTitle>
    <NoticeClose aria-label="关闭"><Icon name="close" /></NoticeClose>
    <Watermark>
      <svg width="44" height="42" viewBox="0 0 44 42" aria-hidden="true">
        <path d="M44 1Q12 2 4 19q-3 9 6 11 9 1 16-5-9 2-11-3Q15 9 44 1z" fill="#1b7fb8" />
        <path d="M28 15q14 1 14 8-3 13-36 17 24-9 24-16 0-5-8-5z" fill="#2d8a3c" />
        <path d="M6 40q2-3 9-5l-3 4z" fill="#b9a62c" />
      </svg>
      <MarkText>
        极光下载站
        <small>www.xz7.com</small>
      </MarkText>
    </Watermark>
    <NoticeRow>
      深度加速关闭卡慢进程
      <Boost>深度加速</Boost>
    </NoticeRow>
  </Notice>
)

const App = () => (
  <Page>
    <GlobalStyle />
    <Title />
    <Menu />
    <Tools />
    <Work>
      <SheetArea>
        <FormulaBar>
          <NameBox>
            <input defaultValue="B2" aria-label="名称框" />
            <Caret />
          </NameBox>
          <IconButton $w={28} $color="#4a5266" aria-label="浏览公式"><Icon name="zoomCell" /></IconButton>
          <IconButton $w={28} aria-label="插入函数"><Fx>fx</Fx></IconButton>
          <FormulaInput defaultValue="745" aria-label="编辑栏" />
        </FormulaBar>
        <GridRow>
          <Sheet />
          <VScroll>
            <SplitGrip />
            <VTrack>
              <Caret $up />
              <VThumb />
              <Caret />
            </VTrack>
          </VScroll>
        </GridRow>
        <SheetBar>
          {["first", "prev", "next", "last"].map(icon => (
            <IconButton key={icon} $w={26} $h={20} $color="#a9adb5" aria-label={icon}>
              <Icon name={icon} />
            </IconButton>
          ))}
          <SheetTab>Sheet1</SheetTab>
          <IconButton $w={16} $h={20} aria-label="新建工作表"><Icon name="plus" size={14} /></IconButton>
          <Push />
          <BarGrip />
          <HScroll>
            <HCaret $left />
            <HThumb />
            <HCaret />
          </HScroll>
          <BarGrip />
        </SheetBar>
      </SheetArea>
      <Pane>
        <PaneHead>
          <Label>选择窗格<Caret /></Label>
          <Push />
          <IconButton aria-label="固定"><Icon name="pin" /></IconButton>
          <IconButton aria-label="关闭"><Icon name="close" /></IconButton>
        </PaneHead>
        <PaneTitle>文档中的对象</PaneTitle>
        <ObjectList />
        <Actions>
          叠放次序
          <FlatButton $w={23} aria-label="上移"><Icon name="up" size={14} /></FlatButton>
          <FlatButton $w={23} aria-label="下移"><Icon name="down" size={14} /></FlatButton>
        </Actions>
        <Actions>
          <FlatButton $w={64}>全部显示</FlatButton>
          <FlatButton $w={64}>全部隐藏</FlatButton>
        </Actions>
      </Pane>
      <SideBar>
        <DragGrip />
        {sideTools.map(([icon, color]) => (
          <IconButton key={icon} $w={32} $h={32} $on={icon === "pointer"} $color={color} aria-label={icon}>
            <Icon name={icon} />
          </IconButton>
        ))}
      </SideBar>
    </Work>
    <StatusBar>
      <IconButton $w={47} aria-label="宏"><Icon name="macro" /></IconButton>
      <Rule $h={14} />
      <Stats>
        <span>平均值=587.875</span>
        <span>计数=24</span>
        <span>求和=1万4109</span>
      </Stats>
      <Push />
      <ViewTools>
        <IconButton $on aria-label="护眼模式"><Icon name="eye" /></IconButton>
        <SplitIcon name="cross" label="阅读模式" />
        <Rule $h={14} $gap={9} />
        <IconButton $on aria-label="普通视图"><Icon name="gridView" /></IconButton>
        <IconButton $w={28} aria-label="页面布局"><Icon name="pageView" /></IconButton>
        <IconButton aria-label="分页预览"><Icon name="splitView" /></IconButton>
        <Rule $h={14} $gap={11} />
        100%
      </ViewTools>
    </StatusBar>
    <MemoryNotice />
  </Page>
)

export default App
